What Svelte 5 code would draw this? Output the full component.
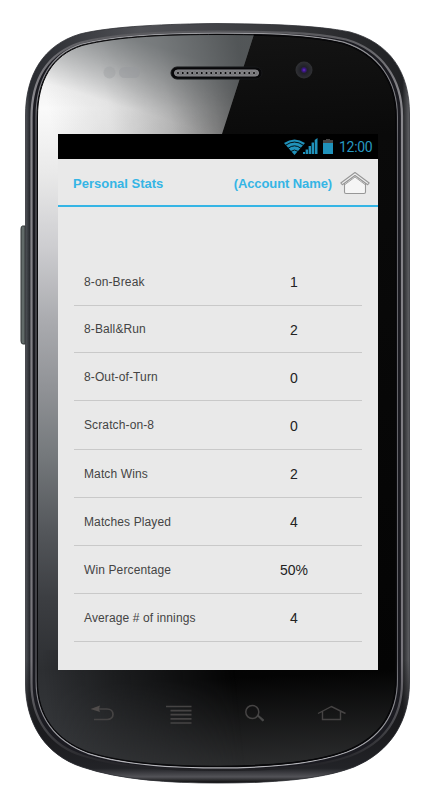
<script>
  const stats = [
    { label: '8-on-Break', value: '1', h: 47 },
    { label: '8-Ball&Run', value: '2', h: 47 },
    { label: '8-Out-of-Turn', value: '0', h: 48 },
    { label: 'Scratch-on-8', value: '0', h: 49 },
    { label: 'Match Wins', value: '2', h: 48 },
    { label: 'Matches Played', value: '4', h: 48 },
    { label: 'Win Percentage', value: '50%', h: 48 },
    { label: 'Average # of innings', value: '4', h: 48 }
  ];
  const holes = Array.from({ length: 17 }, (_, i) => 178 + i * 4.75);
  const shell = 'M217 23.500C170 24 112 26 80 34C43 45 25.500 75 25.500 116V684C25.500 723 45 755 82 767C120 780 170 783 217 783C270 783 320 780 354 767C390 752 409.500 722 409.500 682V114C409.500 72 390 43 350 32C316 25 265 24 217 23.500Z';
  const rim = 'M217 31.500C170 31.500 117 33 81 42.500C48 53 31.500 79 31.500 118V683C31.500 719 50 746 84 756C122 768 170 770 217 770C272 770 316 768 350 756C384 743 402 718 402 682V116C402 79 382 50 346 39.500C312 32 265 31.500 217 31.500Z';
  const glass = 'M217 34.5C172 34.5 118 36 82 45.500C52 55 37.5 81 37.5 117V681C37.5 716 56 740 88 752C122 763 170 766.5 217 766.5C266 766.5 314 763 346 751C379 738 396 714 396 679V117C396 83 379 55 343 43.500C311 35.500 265 34.500 217 34.500Z';
</script>

<main>
  <svg class="phone" width="430" height="802" viewBox="0 0 430 802" fill="none" aria-hidden="true">
    <defs>
      <linearGradient id="shell" x1="25" y1="0" x2="410" y2="0" gradientUnits="userSpaceOnUse">
        <stop stop-color="#55585d" /><stop offset=".012" stop-color="#292b30" /><stop offset=".3" stop-color="#505156" /><stop offset=".75" stop-color="#303134" /><stop offset=".98" stop-color="#202124" /><stop offset="1" stop-color="#66676b" />
      </linearGradient>
      <linearGradient id="lower" x1="0" y1="660" x2="0" y2="783" gradientUnits="userSpaceOnUse">
        <stop stop-color="#111" stop-opacity="0" /><stop offset=".6" stop-color="#1b1b1e" /><stop offset=".88" stop-color="#222327" /><stop offset=".95" stop-color="#535358" /><stop offset="1" stop-color="#080808" />
      </linearGradient>
      <linearGradient id="rimLine" x1="0" y1="31" x2="0" y2="771" gradientUnits="userSpaceOnUse">
        <stop stop-color="#59595d" /><stop offset=".09" stop-color="#8a898e" /><stop offset=".85" stop-color="#77757b" /><stop offset=".94" stop-color="#444448" /><stop offset="1" stop-color="#202024" />
      </linearGradient>
      <linearGradient id="edgeLine" x1="0" y1="31" x2="0" y2="769" gradientUnits="userSpaceOnUse">
        <stop stop-color="#9b9b9f" /><stop offset=".15" stop-color="#65656b" /><stop offset=".85" stop-color="#65656b" /><stop offset="1" stop-color="#b8b8bd" />
      </linearGradient>
      <linearGradient id="glass" x1="180" y1="35" x2="217" y2="767" gradientUnits="userSpaceOnUse">
        <stop stop-color="#141414" /><stop offset=".15" stop-color="#0a0a0a" /><stop offset=".88" stop-color="#040404" /><stop offset="1" stop-color="#2a2b2c" />
      </linearGradient>
      <linearGradient id="side" x1="0" y1="35" x2="0" y2="767" gradientUnits="userSpaceOnUse">
        <stop stop-color="#e0e0e0" /><stop offset=".1" stop-color="#fafafa" /><stop offset=".19" stop-color="#e9e9e9" /><stop offset=".29" stop-color="#cdcdd0" /><stop offset=".39" stop-color="#aaabaf" /><stop offset=".48" stop-color="#919397" /><stop offset=".57" stop-color="#767a7d" /><stop offset=".68" stop-color="#53565a" /><stop offset=".77" stop-color="#3c3e42" /><stop offset=".867" stop-color="#2d2f32" /><stop offset="1" stop-color="#383a3d" />
      </linearGradient>
      <linearGradient id="fade" x1="50" y1="120" x2="245" y2="84" gradientUnits="userSpaceOnUse">
        <stop stop-color="#fff" /><stop offset=".3" stop-color="#e8e8e8" /><stop offset=".6" stop-color="#b8b8b8" /><stop offset=".83" stop-color="#7c7c7c" /><stop offset="1" stop-color="#494949" />
      </linearGradient>
      <linearGradient id="lowerFade" x1="45" y1="690" x2="235" y2="670" gradientUnits="userSpaceOnUse">
        <stop stop-color="#fff" /><stop offset=".35" stop-color="#999" /><stop offset="1" stop-color="#000" />
      </linearGradient>
      <linearGradient id="topShade" x1="85" y1="95" x2="105" y2="30" gradientUnits="userSpaceOnUse">
        <stop stop-color="#555b5e" stop-opacity="0" /><stop offset="1" stop-color="#555b5e" stop-opacity=".6" />
      </linearGradient>
      <radialGradient id="lens"><stop stop-color="#7030c0" /><stop offset=".18" stop-color="#3d168c" /><stop offset=".4" stop-color="#202028" /><stop offset="1" stop-color="#303134" /></radialGradient>
      <mask id="shine" maskUnits="userSpaceOnUse" x="0" y="0" width="430" height="802">
        <path d="M0 0H265L222 134V650H0Z" fill="url(#fade)" />
        <rect y="650" width="260" height="152" fill="url(#lowerFade)" />
      </mask>
      <clipPath id="glassClip"><path d={glass} /></clipPath>
    </defs>
    <path d="M25 226H22.500Q21 226 21 229V341Q21 344 23 344H25Z" fill="#626a69" stroke="#303536" />
    <path d={shell} fill="url(#shell)" />
    <path d={shell} fill="url(#lower)" />
    <path d={shell} stroke="#303136" stroke-width=".8" />
    <path d={rim} fill="#1b1b21" stroke="url(#rimLine)" stroke-width="2.200" />
    <path d={glass} stroke="url(#edgeLine)" stroke-width="4" />
    <path d={glass} fill="url(#glass)" stroke="#050507" stroke-width="1.700" />
    <g clip-path="url(#glassClip)">
      <rect x="37" y="34" width="231" height="734" fill="url(#side)" mask="url(#shine)" />
      <path d="M37 34H254L222 134H37Z" fill="url(#topShade)" />
    </g>
    <path d={glass} stroke="#08080a" />
    <circle cx="109.500" cy="72.500" r="6" fill="#9b9da1" opacity=".4" />
    <rect x="119" y="67" width="21" height="11" rx="5.500" fill="#96999d" opacity=".45" />
    <rect x="171" y="67" width="91" height="12" rx="6" fill="#08080a" stroke="#17181a" />
    <rect x="174.500" y="70" width="84" height="6" rx="3" fill="#77777a" stroke="#8b8b8f" />
    {#each holes as x}
      <circle cx={x} cy="73" r="1.500" fill="#08080a" stroke="#b0b0b3" stroke-width=".6" />
    {/each}
    <circle cx="304" cy="70" r="8.500" fill="url(#lens)" />
    <g stroke="#464444" stroke-width="1.700">
      <path d="M94 719.500H107C115 719.500 115 709 107 709H98" />
      <path d="M90.500 709L100 705.500L99 709L100 712Z" fill="#504c4b" stroke="none" />
      <path d="M166 706.500H191.500M170.500 710.600H191.500M170.500 714.700H191.500M170.500 718.900H191.500M170.500 723H191.500" />
      <circle cx="252.300" cy="712" r="6.500" stroke-width="1.500" />
      <path d="M257 716L258 714.500L264 719.500Q264.500 721 262.500 721.500Z" fill="#484848" stroke="none" />
      <path d="M318 713.500L331.500 706.500L345.500 713.500M322.500 711.500V719.500H340.500V711.500" stroke-width="1.400" />
    </g>
  </svg>

  <section class="screen">
    <div class="status">
      <svg width="54" height="18" viewBox="0 0 54 18" fill="none">
        <path d="M0 5Q10.500 -2 21 5L10.500 17Z" fill="#2092bb" />
        <path d="M1.500 7.300Q10.500 .8 19.500 7.300M4 10.300Q10.500 5.400 17 10.300M6.700 13.500Q10.500 10.500 14.300 13.500" stroke="#000" stroke-width=".9" />
        <path d="M19 16V14H21V16ZM21.600 16V11.500H24V16ZM24.600 16V8H27V16ZM27.600 16V4.500H30V16ZM30.700 16V2L33.500 0V16Z" fill="#2092bb" />
        <path d="M39 2H42V1H46V2H49V6H39Z" fill="#454545" /><path d="M39 5H49V16H39Z" fill="#2092bb" />
      </svg>
      <span>12:00</span>
    </div>
    <header>
      <h1>Personal Stats</h1>
      <span class="account">(Account Name)</span>
      <svg width="30" height="24" viewBox="0 0 30 24" fill="none" stroke="#979797" stroke-width="1.100" stroke-linejoin="round">
        <path d="M4.500 12V21Q4.500 22.500 6 22.500H24Q25.500 22.500 25.500 21V12L15 4Z" fill="#f5f5f5" />
        <path d="M15 1.500L.800 12L2.300 13.700L15 4.500L27.700 13.700L29.200 12Z" fill="#eee" />
        <path d="M5 13.500L15 6L25 13.500" stroke-width=".9" />
      </svg>
    </header>
    <ul>
      {#each stats as stat}
        <li style:height="{stat.h}px"><span class="label">{stat.label}</span><span class="value">{stat.value}</span></li>
      {/each}
    </ul>
  </section>
</main>

<style>
  :global(body) { margin: 0; background: #fff; }
  main { position: relative; box-sizing: border-box; width: 430px; height: 802px; padding: 134px 52px 132px 58px; overflow: hidden; font-family: "Liberation Sans", Arial, sans-serif; }
  .phone { position: absolute; inset: 0; }
  .screen { position: relative; box-sizing: border-box; height: 536px; background: #e9e9e9; }
  .status { box-sizing: border-box; height: 25px; display: flex; gap: 1px; padding: 4px 0 0 226px; background: #000; color: #2698c1; }
  .status span { font: 14px/19px Roboto, sans-serif; letter-spacing: -.3px; }
  .status svg { flex: none; }
  header { box-sizing: border-box; height: 48px; display: flex; align-items: center; border-bottom: 2px solid #35b5e5; padding: 0 8px 0 15px; color: #35b5e5; }
  h1 { margin: 0; padding-top: 3px; font-size: 13px; line-height: 16px; font-weight: 700; }
  .account { margin-left: auto; margin-right: 8px; padding-top: 3px; font-size: 13px; line-height: 16px; font-weight: 700; letter-spacing: -.1px; }
  header svg { margin-top: 2px; }
  ul { list-style: none; margin: 52px 16px 0; padding: 0; }
  li { box-sizing: border-box; display: flex; align-items: center; border-bottom: 1px solid #c9c9c9; padding: 0 28px 0 10px; color: #444; font-size: 12px; }
  .label { flex: 1; line-height: 14px; letter-spacing: .12px; }
  .value { width: 80px; text-align: center; font-size: 14px; line-height: 16px; color: #222; }
  li:nth-child(n + 2):nth-child(-n + 4) .value { padding-top: 2px; }
</style>
